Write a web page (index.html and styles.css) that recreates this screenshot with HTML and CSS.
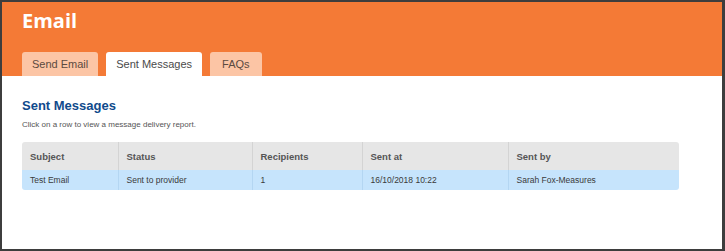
FILE: index.html
```html
<!DOCTYPE html>
<html lang="en">
<head>
    <meta charset="UTF-8">
    <title>Email - Sent Messages</title>
    <link rel="stylesheet" href="styles.css">
</head>
<body>
<div class="frame">
    <header class="page-header">
        <h1>Email</h1>
        <nav class="tabs">
            <a class="tab" href="#">Send Email</a>
            <a class="tab active" href="#">Sent Messages</a>
            <a class="tab" href="#">FAQs</a>
        </nav>
    </header>

    <main class="content">
        <h2>Sent Messages</h2>
        <p class="hint">Click on a row to view a message delivery report.</p>

        <table class="messages">
            <colgroup>
                <col style="width: 96px">
                <col style="width: 134px">
                <col style="width: 110px">
                <col style="width: 146px">
                <col>
            </colgroup>
            <thead>
                <tr>
                    <th>Subject</th>
                    <th>Status</th>
                    <th>Recipients</th>
                    <th>Sent at</th>
                    <th>Sent by</th>
                </tr>
            </thead>
            <tbody>
                <tr>
                    <td>Test Email</td>
                    <td>Sent to provider</td>
                    <td>1</td>
                    <td>16/10/2018 10:22</td>
                    <td>Sarah Fox-Measures</td>
                </tr>
            </tbody>
        </table>
    </main>
</div>
</body>
</html>
```

FILE: styles.css
```css
html, body {
    margin: 0;
    padding: 0;
    background-color: #ffffff;
}

.frame {
    width: 725px;
    height: 251px;
    box-sizing: border-box;
    border: 2px solid #3d3d3d;
    border-right-width: 3px;
    font-family: "Liberation Sans", Arial, sans-serif;
    overflow: hidden;
}

.page-header {
    background-color: #f47a36;
    height: 74px;
    padding: 0 20px;
    display: flex;
    flex-direction: column;
    justify-content: space-between;
}

.page-header h1 {
    margin: 5px 0 0 0;
    color: #ffffff;
    font-family: "Open Sans", sans-serif;
    font-size: 20px;
    font-weight: 700;
    line-height: 28px;
}

.tabs {
    display: flex;
    gap: 8px;
}

.tab {
    display: block;
    height: 24px;
    line-height: 25px;
    padding: 0 10px;
    background-color: #fcc5a5;
    color: #5b4a40;
    font-size: 11px;
    text-decoration: none;
    border-radius: 3px 3px 0 0;
}

.tab:last-child {
    padding: 0 12px;
}

.tab.active {
    background-color: #ffffff;
    color: #4a4a4a;
}

.content {
    padding: 22px 20px 0 20px;
}

.content h2 {
    margin: 0;
    color: #0f4a8c;
    font-size: 13px;
    font-weight: 700;
    line-height: 16px;
}

.hint {
    margin: 5px 0 11px 0;
    color: #555555;
    font-size: 8px;
    line-height: 12px;
}

.messages {
    width: 657px;
    border-collapse: collapse;
    table-layout: fixed;
    border-radius: 3px;
    overflow: hidden;
}

.messages th {
    height: 28px;
    padding: 0 8px;
    background-color: #e6e6e6;
    color: #555555;
    font-size: 9.5px;
    font-weight: 700;
    text-align: left;
    border-left: 1px solid #d4d4d4;
}

.messages td {
    height: 20px;
    padding: 0 8px;
    background-color: #c6e4fc;
    color: #3a3a3a;
    font-size: 8.5px;
    border-left: 1px solid #b4d6f2;
}

.messages th:first-child,
.messages td:first-child {
    border-left: none;
}
```
